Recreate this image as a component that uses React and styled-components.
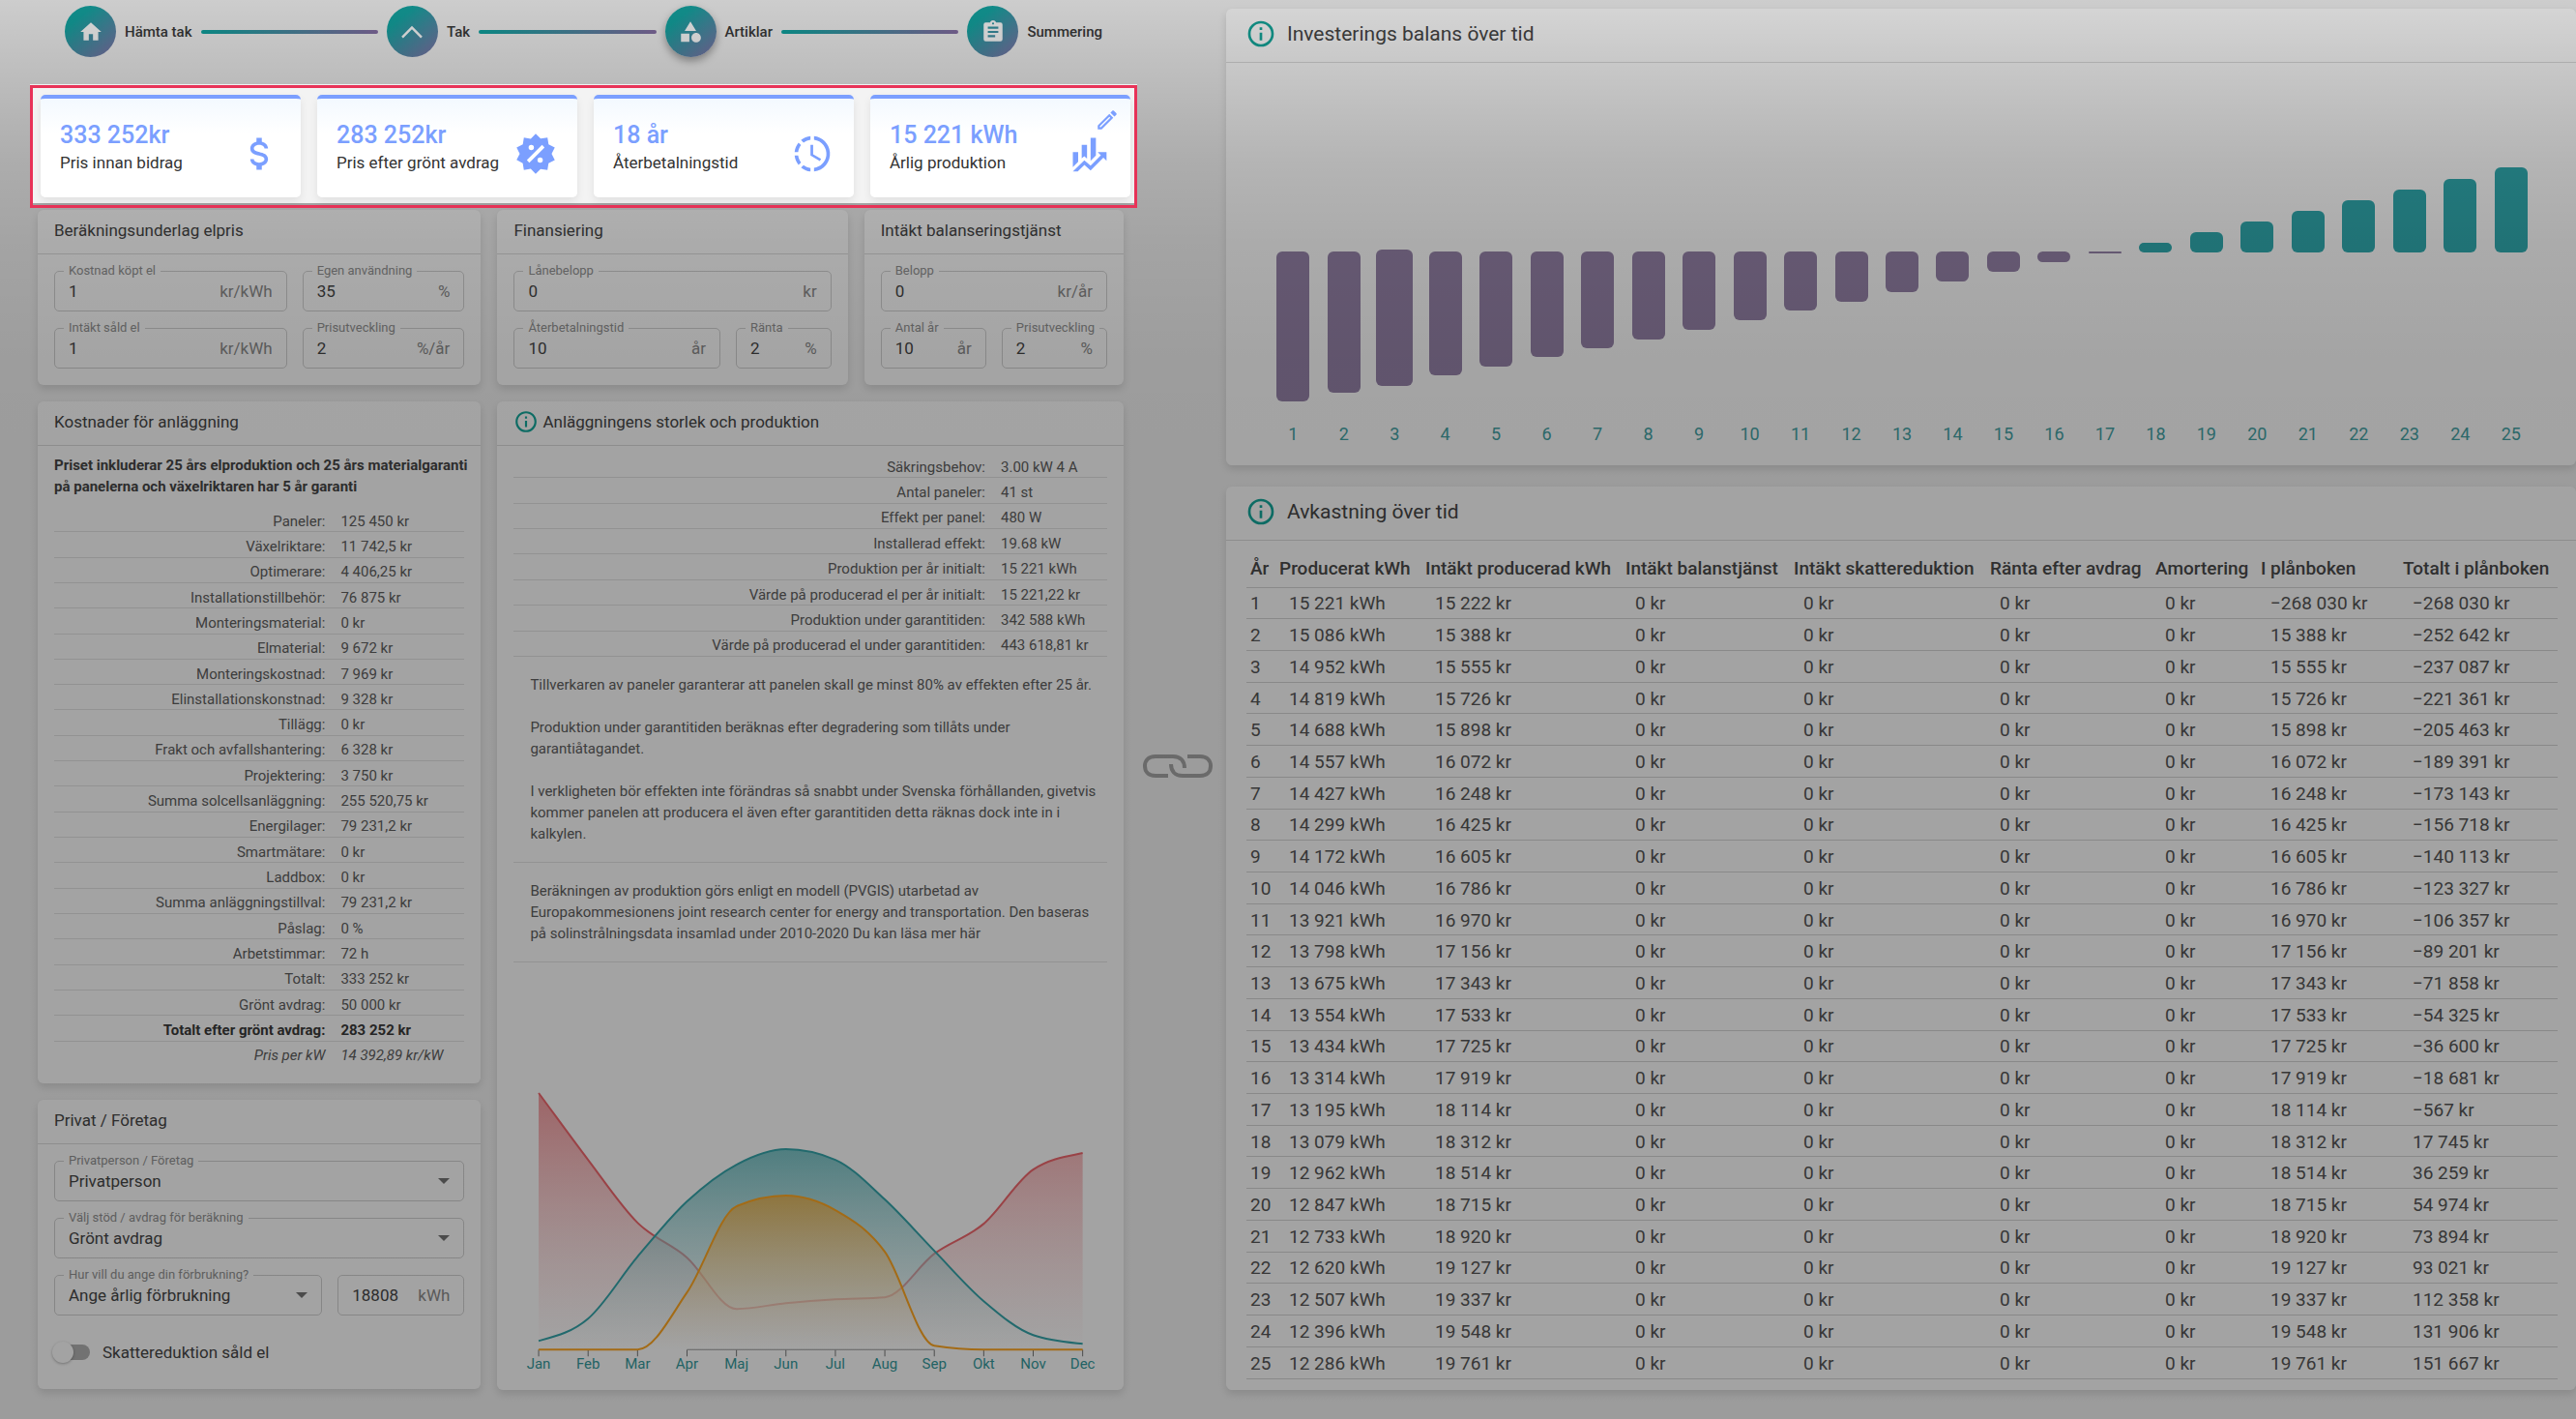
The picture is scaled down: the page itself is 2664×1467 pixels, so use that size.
import React from "react";
import styled, { createGlobalStyle } from "styled-components";

const GlobalStyle = createGlobalStyle`
  * {
    box-sizing: border-box;
  }

  body {
    margin: 0;
    background: #f4f4f4;
    color: #464646;
    font-family: Roboto, "Liberation Sans", sans-serif;
    font-size: 15px;
  }

  input, select, button {
    font: inherit;
    color: inherit;
  }
`;

const icons = {
  home: "M10,20V14H14V20H19V12H22L12,3L2,12H5V20H10Z",
  shape: "M11,13.5V21.5H3V13.5H11M12,2L17.5,11H6.5L12,2M17.5,13C20,13 22,15 22,17.5C22,20 20,22 17.5,22C15,22 13,20 13,17.5C13,15 15,13 17.5,13Z",
  roof: "M12,6.2L22,16.3L20.4,17.9L12,9.4L3.6,17.9L2,16.3Z",
  clipboard: "M17,9H7V7H17M17,13H7V11H17M14,17H7V15H14M12,3A1,1 0 0,1 13,4A1,1 0 0,1 12,5A1,1 0 0,1 11,4A1,1 0 0,1 12,3M19,3H14.82C14.4,1.84 13.3,1 12,1C10.7,1 9.6,1.84 9.18,3H5A2,2 0 0,0 3,5V19A2,2 0 0,0 5,21H19A2,2 0 0,0 21,19V5A2,2 0 0,0 19,3Z",
  dollar: "M7,15H9C9,16.08 10.37,17 12,17C13.63,17 15,16.08 15,15C15,13.9 13.96,13.5 11.76,12.97C9.64,12.44 7,11.78 7,9C7,7.21 8.47,5.69 10.5,5.18V3H13.5V5.18C15.53,5.69 17,7.21 17,9H15C15,7.92 13.63,7 12,7C10.37,7 9,7.92 9,9C9,10.1 10.04,10.5 12.24,11.03C14.36,11.56 17,12.22 17,15C17,16.79 15.53,18.31 13.5,18.82V21H10.5V18.82C8.47,18.31 7,16.79 7,15Z",
  sale: "M18.65,2.85L19.26,6.71L22.77,8.5L21,12L22.78,15.5L19.24,17.29L18.63,21.15L14.74,20.54L11.97,23.3L9.19,20.5L5.33,21.14L4.71,17.25L1.22,15.47L3,11.97L1.23,8.5L4.74,6.69L5.35,2.86L9.22,3.5L12,0.69L14.77,3.46L18.65,2.85M9.5,7A1.5,1.5 0 0,0 8,8.5A1.5,1.5 0 0,0 9.5,10A1.5,1.5 0 0,0 11,8.5A1.5,1.5 0 0,0 9.5,7M14.5,14A1.5,1.5 0 0,0 13,15.5A1.5,1.5 0 0,0 14.5,17A1.5,1.5 0 0,0 16,15.5A1.5,1.5 0 0,0 14.5,14M8.41,17L17,8.41L15.59,7L7,15.59L8.41,17Z",
  clock: "M13,2.03V4.05C17.39,4.59 20.5,8.58 19.96,12.97C19.5,16.61 16.64,19.5 13,19.93V21.93C18.5,21.38 22.5,16.5 21.95,11C21.5,6.25 17.73,2.5 13,2.03M11,2.06C9.05,2.25 7.19,3 5.67,4.26L7.1,5.74C8.22,4.84 9.57,4.26 11,4.06V2.06M4.26,5.67C3,7.19 2.25,9.04 2.05,11H4.05C4.24,9.58 4.8,8.23 5.69,7.1L4.26,5.67M2.06,13C2.26,14.96 3.03,16.81 4.27,18.33L5.69,16.9C4.81,15.77 4.24,14.42 4.06,13H2.06M7.1,18.37L5.67,19.74C7.18,21 9.04,21.79 11,22V20C9.58,19.82 8.23,19.25 7.1,18.37M12.5,7V12.25L17,14.92L16.25,16.15L11,13V7H12.5Z",
  finance: "M6,16.5L3,19.44V11H6M11,14.66L9.43,13.32L8,14.64V7H11M16,13L13,16V3H16M18.81,12.81L17,11H22V16L20.21,14.21L13,21.36L9.53,18.34L5.75,22H3L9.47,15.66L13,18.64",
  pencil: "M14.06,9L15,9.94L5.92,19H5V18.08L14.06,9M17.66,3C17.41,3 17.15,3.1 16.96,3.29L15.13,5.12L18.88,8.87L20.71,7.04C21.1,6.65 21.1,6 20.71,5.63L18.37,3.29C18.17,3.09 17.92,3 17.66,3M14.06,6.19L3,17.25V21H6.75L17.81,9.94L14.06,6.19Z",
  info: "M11,9H13V7H11M12,20C7.59,20 4,16.41 4,12C4,7.59 7.59,4 12,4C16.41,4 20,7.59 20,12C20,16.41 16.41,20 12,20M12,2A10,10 0 0,0 2,12A10,10 0 0,0 12,22A10,10 0 0,0 22,12A10,10 0 0,0 12,2M11,17H13V11H11V17Z",
};

const Icon = ({ name, size, ...props }) => (
  <svg width={size} height={size} viewBox="0 0 24 24" fill="currentColor" aria-hidden="true" {...props}>
    <path d={icons[name]} />
  </svg>
);

const Page = styled.div`
  position: relative;
  display: grid;
  grid-template-columns: minmax(0, 1123fr) 106px minmax(0, 1396fr);
  min-height: 100vh;
  padding: 0 0 31px 39px;
`;

// darkens everything except the highlighted tour target
const Shade = styled.div`
  position: absolute;
  inset: 0;
  z-index: 1;
  pointer-events: none;
  background: linear-gradient(
    rgba(0, 0, 0, 0.16) 0,
    rgba(0, 0, 0, 0.21) 60px,
    rgba(0, 0, 0, 0.255) 115px,
    rgba(0, 0, 0, 0.295) 170px,
    rgba(0, 0, 0, 0.33) 250px,
    rgba(0, 0, 0, 0.355) 370px,
    rgba(0, 0, 0, 0.362) 450px
  );
`;

const Calculator = styled.main`
  display: flex;
  flex-direction: column;
  padding-top: 6px;
`;

const Stepper = styled.nav`
  display: flex;
  align-items: center;
  gap: 9px;
  margin: 0 22px 0 28px;
`;

const Step = styled.a`
  display: flex;
  align-items: center;
  gap: 9px;
  color: #3a3a3a;
  font-size: 15px;
  font-weight: 500;
  text-decoration: none;
`;

const StepCircle = styled.span`
  display: flex;
  align-items: center;
  justify-content: center;
  width: 53px;
  height: 53px;
  border-radius: 50%;
  color: #fff;
  background: linear-gradient(140deg, #14a6a3 25%, #8573ab 100%);
  box-shadow: ${(props) => (props.$active ? "0 4px 8px rgba(0, 0, 0, 0.35)" : "none")};
`;

const StepLine = styled.span`
  flex: 1;
  height: 4px;
  border-radius: 2px;
  background: linear-gradient(90deg, #0ea5a0, #876fa5);
`;

const KpiRow = styled.section`
  position: relative;
  z-index: 2;
  display: grid;
  grid-template-columns: repeat(4, 1fr);
  gap: 17px;
  margin: 29px -14px 2px -8px;
  padding: 7px 4px 8px 8px;
  border: 3px solid #e83358;
  background: #f3f3f3;
  box-shadow: 0 -1px 0 #f0f0f0, inset 0 -2px 0 #a2a2a2;
`;

const KpiCard = styled.article`
  position: relative;
  display: flex;
  align-items: flex-end;
  justify-content: space-between;
  padding: 21px 21px 23px 20px;
  border-top: 4px solid #7b9fff;
  border-radius: 5px;
  color: #7b9fff;
  background: linear-gradient(#f3f9ff, #fff 35%);
  box-shadow: 0 4px 8px rgba(0, 0, 0, 0.08);
`;

const KpiValue = styled.div`
  font-size: 25px;
  font-weight: 500;
  line-height: 33px;
`;

const KpiLabel = styled.div`
  color: #333;
  font-size: 17px;
  line-height: 25px;
`;

const EditButton = styled.button`
  position: absolute;
  top: 9px;
  right: 11px;
  display: flex;
  padding: 0;
  border: 0;
  background: none;
`;

const SettingsRow = styled.div`
  display: grid;
  grid-template-columns: 458fr 362fr 268fr;
  gap: 17px;
  margin-bottom: 17px;
`;

const DetailsRow = styled.div`
  flex: 1;
  display: grid;
  grid-template-columns: minmax(0, 458fr) minmax(0, 647fr);
  gap: 17px;
`;

const Stack = styled.div`
  display: flex;
  flex-direction: column;
  gap: ${(props) => props.$gap}px;
`;

const Card = styled.section`
  display: flex;
  flex-direction: column;
  border-radius: 6px;
  background: #fff;
  box-shadow: 0 4px 8px rgba(0, 0, 0, 0.12);
`;

const ChartCard = styled(Card)`
  margin-top: 9px;
`;

const CardHeader = styled.header`
  display: flex;
  align-items: center;
  gap: ${(props) => (props.$large ? 11 : 4)}px;
  height: ${(props) => (props.$large ? 56 : 46)}px;
  padding: 0 ${(props) => (props.$large ? 20 : 17)}px 3px;
  border-bottom: 1px solid #dcdcdc;

  h2 {
    margin: 0;
    font-size: ${(props) => (props.$large ? 21 : 17)}px;
    font-weight: 400;
  }

  svg {
    color: #14a89c;
  }
`;

const FieldGrid = styled.div`
  display: grid;
  grid-template-columns: ${(props) => props.$columns};
  gap: 17px 16px;
  padding: 17px;
`;

const FieldBox = styled.div`
  position: relative;
  grid-column: ${(props) => (props.$wide ? "1 / -1" : "auto")};
  display: flex;
  align-items: center;
  height: 42px;
  padding: 0 14px;
  border: 1px solid #d2d2d2;
  border-radius: 5px;

  label {
    position: absolute;
    top: -8px;
    left: 9px;
    padding: 0 5px;
    background: #fff;
    color: #939393;
    font-size: 13px;
    line-height: 14px;
    white-space: nowrap;
  }

  input, select {
    flex: 1;
    min-width: 0;
    width: 0;
    height: 38px;
    padding: 0;
    border: 0;
    outline: 0;
    background: none;
    font-size: 17px;
    appearance: none;
  }

  span {
    color: #8c8c8c;
    font-size: 17px;
  }
`;

const SwitchRow = styled.div`
  grid-column: 1 / -1;
  display: flex;
  align-items: center;
  gap: 13px;
  height: 42px;
  font-size: 17px;
`;

const Switch = styled.input`
  position: relative;
  appearance: none;
  width: 37px;
  height: 16px;
  margin: 0;
  border-radius: 8px;
  background: #b2b2b2;

  &::before {
    content: "";
    position: absolute;
    top: -3px;
    left: -2px;
    width: 22px;
    height: 22px;
    border-radius: 50%;
    background: #fff;
    box-shadow: 0 1px 3px rgba(0, 0, 0, 0.3);
  }

  &:checked::before {
    left: 17px;
  }
`;

const CardBody = styled.div`
  padding: ${(props) => props.$padding};
`;

const Guarantee = styled.p`
  margin: 0 0 10px;
  font-size: 15px;
  font-weight: 700;
  line-height: 22px;
  white-space: nowrap;
`;

const SpecTable = styled.table`
  width: 100%;
  height: ${(props) => props.$height}px;
  border-collapse: collapse;
  color: #606060;
  line-height: 20px;

  tr + tr {
    border-top: 1px solid #e4e4e4;
  }

  th {
    padding: 4px 8px 0 0;
    font-weight: inherit;
    text-align: right;
  }

  td {
    width: ${(props) => props.$valueWidth}px;
    padding: 4px 0 0 8px;
    white-space: nowrap;
  }
`;

const SpecRow = styled.tr`
  color: ${(props) => (props.$kind === "total" ? "#3a3a3a" : "inherit")};
  font-weight: ${(props) => (props.$kind === "total" ? 700 : 400)};
  font-style: ${(props) => (props.$kind === "note" ? "italic" : "normal")};
`;

const Notes = styled.div`
  padding: 18px 0 18px 17px;
  border-top: 1px solid #e4e4e4;
  border-bottom: ${(props) => (props.$last ? "1px solid #e4e4e4" : "0")};
  color: #606060;
  line-height: 22px;

  p {
    margin: 0 0 22px;
  }

  p:last-child {
    margin: 0;
  }
`;

const AreaSvg = styled.svg`
  display: block;
  width: 100%;
  margin: auto 0 12px;
`;

const LinkColumn = styled.div`
  display: flex;
  align-items: center;
  justify-content: center;
  padding: 148px 0 0 6px;
`;

const BarPlot = styled.div`
  display: grid;
  grid-template-columns: repeat(25, 1fr);
  padding: 0 41px 13px 43px;
`;

const BarColumn = styled.div`
  display: flex;
  flex-direction: column;
  align-items: center;
  color: #45a3a5;
  font-size: 18px;
  line-height: 38px;
`;

const BarTrack = styled.div`
  height: 365px;
`;

const Bar = styled.div`
  width: ${(props) => (props.$hovered ? 38 : 34)}px;
  border-radius: 6px;
  background: ${(props) => (props.$negative ? "#9683a9" : "#30aaaf")};
`;

const ReturnTable = styled.table`
  width: 100%;
  table-layout: fixed;
  border-collapse: collapse;
  color: #565656;
  font-size: 19px;
  white-space: nowrap;

  th, td {
    padding: 1px 0 0 4px;
    border-bottom: 1px solid #d6d6d6;
    text-align: left;
  }

  th {
    height: 48px;
    padding-top: 9px;
    color: #4a4a4a;
    font-weight: 500;
  }

  tbody {
    height: 818px;
  }

  td + td {
    padding-left: 14px;
  }
`;

const steps = [
  { label: "Hämta tak", icon: "home" },
  { label: "Tak", icon: "roof" },
  { label: "Artiklar", icon: "shape", active: true },
  { label: "Summering", icon: "clipboard" },
];

const kpis = [
  { value: "333 252kr", label: "Pris innan bidrag", icon: "dollar" },
  { value: "283 252kr", label: "Pris efter grönt avdrag", icon: "sale" },
  { value: "18 år", label: "Återbetalningstid", icon: "clock" },
  { value: "15 221 kWh", label: "Årlig produktion", icon: "finance", editable: true },
];

const costs = [
  ["Paneler:", "125 450 kr"],
  ["Växelriktare:", "11 742,5 kr"],
  ["Optimerare:", "4 406,25 kr"],
  ["Installationstillbehör:", "76 875 kr"],
  ["Monteringsmaterial:", "0 kr"],
  ["Elmaterial:", "9 672 kr"],
  ["Monteringskostnad:", "7 969 kr"],
  ["Elinstallationskonstnad:", "9 328 kr"],
  ["Tillägg:", "0 kr"],
  ["Frakt och avfallshantering:", "6 328 kr"],
  ["Projektering:", "3 750 kr"],
  ["Summa solcellsanläggning:", "255 520,75 kr"],
  ["Energilager:", "79 231,2 kr"],
  ["Smartmätare:", "0 kr"],
  ["Laddbox:", "0 kr"],
  ["Summa anläggningstillval:", "79 231,2 kr"],
  ["Påslag:", "0 %"],
  ["Arbetstimmar:", "72 h"],
  ["Totalt:", "333 252 kr"],
  ["Grönt avdrag:", "50 000 kr"],
  ["Totalt efter grönt avdrag:", "283 252 kr", "total"],
  ["Pris per kW", "14 392,89 kr/kW", "note"],
];

const production = [
  ["Säkringsbehov:", "3.00 kW 4 A"],
  ["Antal paneler:", "41 st"],
  ["Effekt per panel:", "480 W"],
  ["Installerad effekt:", "19.68 kW"],
  ["Produktion per år initialt:", "15 221 kWh"],
  ["Värde på producerad el per år initialt:", "15 221,22 kr"],
  ["Produktion under garantitiden:", "342 588 kWh"],
  ["Värde på producerad el under garantitiden:", "443 618,81 kr"],
];

// [producerat kWh, intäkt kr, totalt i plånboken kr]
const years = [
  [15221, 15222, -268030],
  [15086, 15388, -252642],
  [14952, 15555, -237087],
  [14819, 15726, -221361],
  [14688, 15898, -205463],
  [14557, 16072, -189391],
  [14427, 16248, -173143],
  [14299, 16425, -156718],
  [14172, 16605, -140113],
  [14046, 16786, -123327],
  [13921, 16970, -106357],
  [13798, 17156, -89201],
  [13675, 17343, -71858],
  [13554, 17533, -54325],
  [13434, 17725, -36600],
  [13314, 17919, -18681],
  [13195, 18114, -567],
  [13079, 18312, 17745],
  [12962, 18514, 36259],
  [12847, 18715, 54974],
  [12733, 18920, 73894],
  [12620, 19127, 93021],
  [12507, 19337, 112358],
  [12396, 19548, 131906],
  [12286, 19761, 151667],
];

const columns = [
  ["År", 30],
  ["Producerat kWh", 151],
  ["Intäkt producerad kWh", 207],
  ["Intäkt balanstjänst", 174],
  ["Intäkt skattereduktion", 203],
  ["Ränta efter avdrag", 171],
  ["Amortering", 109],
  ["I plånboken", 147],
  ["Totalt i plånboken", 164],
];

const months = ["Jan", "Feb", "Mar", "Apr", "Maj", "Jun", "Jul", "Aug", "Sep", "Okt", "Nov", "Dec"];

const series = [
  { id: "use", color: "#f0686e", values: [265, 196, 131, 95, 42, 48, 52, 54, 99, 130, 186, 203] },
  { id: "sun", color: "#35a5aa", values: [9, 32, 96, 153, 191, 207, 196, 155, 102, 50, 15, 6] },
  { id: "own", color: "#ffa722", values: [0, 0, 0, 59, 148, 159, 144, 101, 4, 0, 0, 0] },
];

const format = (n) => String(n).replace("-", "−").replace(/(\d)(?=(\d{3})+$)/g, "$1 ");

const BASE = 275;
const LEFT = 43;
const STEP = 51.1;

// monotone cubic curve through the monthly values
const curve = (values) => {
  const slopes = values.slice(1).map((v, i) => v - values[i]);
  const tangents = values.map((_, i) => {
    if (i === 0 || i === values.length - 1) {
      return slopes[i === 0 ? 0 : i - 1] * 0.6;
    }
    const a = slopes[i - 1];
    const b = slopes[i];
    if (a * b <= 0) return 0;
    return Math.sign(a) * Math.min(Math.abs(a) * 2, Math.abs(b) * 2, Math.abs(a + b) / 2);
  });
  // the steep first drop of the consumption curve starts almost straight
  if (Math.abs(slopes[0]) > 50) tangents[0] = slopes[0];
  const x = (i) => LEFT + i * STEP;
  return values.slice(1).reduce((path, v, i) => {
    const c1 = BASE - values[i] - tangents[i] / 3;
    const c2 = BASE - v + tangents[i + 1] / 3;
    return `${path}C${x(i) + STEP / 3},${c1} ${x(i + 1) - STEP / 3},${c2} ${x(i + 1)},${BASE - v}`;
  }, `M${LEFT},${BASE - values[0]}`);
};

const AreaChart = () => (
  <AreaSvg viewBox="0 0 647 304" role="img" aria-label="Produktion per månad">
    <defs>
      {series.map(({ id, color }) => (
        <linearGradient key={id} id={id} x1="0" x2="0" y1="0" y2="1">
          <stop offset="0" stopColor={color} stopOpacity="0.65" />
          <stop offset="1" stopColor="#fff" stopOpacity="0.4" />
        </linearGradient>
      ))}
    </defs>
    {months.map((month, i) => (
      <g key={month}>
        <path d={`M${LEFT + i * STEP},${BASE}v7`} stroke="#777" />
        <text x={LEFT + i * STEP} y="295" textAnchor="middle" fontSize="15" fill="#359a9c">
          {month}
        </text>
      </g>
    ))}
    {series.map(({ id, color, values }) => (
      <g key={id}>
        <path d={`${curve(values)}V${BASE}H${LEFT}Z`} fill={`url(#${id})`} />
        <path d={curve(values)} fill="none" stroke={color} strokeWidth="2" />
      </g>
    ))}
    <path d={`M${LEFT + STEP * 3},${BASE}H${LEFT + STEP * 8}`} stroke="#999" />
  </AreaSvg>
);

const Field = ({ id, label, value, unit, wide, options }) => (
  <FieldBox $wide={wide}>
    {label && <label htmlFor={id}>{label}</label>}
    {options ? (
      <>
        <select id={id} defaultValue={value}>
          {options.map((option) => (
            <option key={option}>{option}</option>
          ))}
        </select>
        <svg width="12" height="6" viewBox="0 0 12 6" aria-hidden="true">
          <path d="M0,0H12L6,6Z" fill="#757575" />
        </svg>
      </>
    ) : (
      <>
        <input id={id} defaultValue={value} aria-label={label ? undefined : "Årlig förbrukning"} />
        <span>{unit}</span>
      </>
    )}
  </FieldBox>
);

const Specs = ({ rows, ...props }) => (
  <SpecTable {...props}>
    <tbody>
      {rows.map(([label, value, kind]) => (
        <SpecRow key={label} $kind={kind}>
          <th scope="row">{label}</th>
          <td>{value}</td>
        </SpecRow>
      ))}
    </tbody>
  </SpecTable>
);

const Header = ({ title, info, large }) => (
  <CardHeader $large={large}>
    {info && <Icon name="info" size={large ? 32 : 26} />}
    <h2>{title}</h2>
  </CardHeader>
);

const App = () => (
  <>
    <GlobalStyle />
    <Page>
      <Calculator>
        <Stepper aria-label="Steg">
          {steps.map(({ label, icon, active }, i) => (
            <React.Fragment key={label}>
              {i > 0 && <StepLine />}
              <Step href="#">
                <StepCircle $active={active}>
                  <Icon name={icon} size={26} />
                </StepCircle>
                {label}
              </Step>
            </React.Fragment>
          ))}
        </Stepper>

        <KpiRow>
          {kpis.map(({ value, label, icon, editable }) => (
            <KpiCard key={label}>
              <div>
                <KpiValue>{value}</KpiValue>
                <KpiLabel>{label}</KpiLabel>
              </div>
              <Icon name={icon} size={44} />
              {editable && (
                <EditButton type="button" aria-label="Redigera">
                  <Icon name="pencil" size={26} />
                </EditButton>
              )}
            </KpiCard>
          ))}
        </KpiRow>

        <SettingsRow>
          <Card>
            <Header title="Beräkningsunderlag elpris" />
            <FieldGrid $columns="241fr 168fr">
              <Field id="bought" label="Kostnad köpt el" value="1" unit="kr/kWh" />
              <Field id="own-use" label="Egen användning" value="35" unit="%" />
              <Field id="sold" label="Intäkt såld el" value="1" unit="kr/kWh" />
              <Field id="price-trend" label="Prisutveckling" value="2" unit="%/år" />
            </FieldGrid>
          </Card>
          <Card>
            <Header title="Finansiering" />
            <FieldGrid $columns="214fr 99fr">
              <Field id="loan" label="Lånebelopp" value="0" unit="kr" wide />
              <Field id="payback" label="Återbetalningstid" value="10" unit="år" />
              <Field id="interest" label="Ränta" value="2" unit="%" />
            </FieldGrid>
          </Card>
          <Card>
            <Header title="Intäkt balanseringstjänst" />
            <FieldGrid $columns="1fr 1fr">
              <Field id="amount" label="Belopp" value="0" unit="kr/år" wide />
              <Field id="year-count" label="Antal år" value="10" unit="år" />
              <Field id="service-trend" label="Prisutveckling" value="2" unit="%" />
            </FieldGrid>
          </Card>
        </SettingsRow>

        <DetailsRow>
          <Stack $gap={17}>
            <Card>
              <Header title="Kostnader för anläggning" />
              <CardBody $padding="9px 17px 18px">
                <Guarantee>
                  Priset inkluderar 25 års elproduktion och 25 års materialgaranti
                  <br />
                  på panelerna och växelriktaren har 5 år garanti
                </Guarantee>
                <Specs rows={costs} $height={578} $valueWidth={136} />
              </CardBody>
            </Card>
            <Card>
              <Header title="Privat / Företag" />
              <FieldGrid $columns="277fr 131fr">
                <Field id="customer" label="Privatperson / Företag" value="Privatperson" options={["Privatperson", "Företag"]} wide />
                <Field id="support" label="Välj stöd / avdrag för beräkning" value="Grönt avdrag" options={["Grönt avdrag", "Inget avdrag"]} wide />
                <Field id="usage-type" label="Hur vill du ange din förbrukning?" value="Ange årlig förbrukning" options={["Ange årlig förbrukning"]} />
                <Field id="usage" value="18808" unit="kWh" />
                <SwitchRow>
                  <Switch type="checkbox" id="tax" />
                  <label htmlFor="tax">Skattereduktion såld el</label>
                </SwitchRow>
              </FieldGrid>
            </Card>
          </Stack>

          <Card>
            <Header title="Anläggningens storlek och produktion" info />
            <CardBody $padding="7px 17px 0">
              <Specs rows={production} $height={210} $valueWidth={118} />
              <Notes>
                <p>Tillverkaren av paneler garanterar att panelen skall ge minst 80% av effekten efter 25 år.</p>
                <p>
                  Produktion under garantitiden beräknas efter degradering som tillåts under
                  <br />
                  garantiåtagandet.
                </p>
                <p>
                  I verkligheten bör effekten inte förändras så snabbt under Svenska förhållanden, givetvis
                  <br />
                  kommer panelen att producera el även efter garantitiden detta räknas dock inte in i
                  <br />
                  kalkylen.
                </p>
              </Notes>
              <Notes $last>
                <p>
                  Beräkningen av produktion görs enligt en modell (PVGIS) utarbetad av
                  <br />
                  Europakommesionens joint research center for energy and transportation. Den baseras
                  <br />
                  på solinstrålningsdata insamlad under 2010-2020 Du kan läsa mer här
                </p>
              </Notes>
            </CardBody>
            <AreaChart />
          </Card>
        </DetailsRow>
      </Calculator>

      <LinkColumn>
        <svg width="74" height="26" viewBox="0 0 74 26" fill="none" stroke="#a6a6a6" strokeWidth="4" aria-hidden="true">
          <path d="M27,23H14C6,23 3,18 3,13C3,8 6,3 14,3H32C40,3 44,8 44,15" />
          <path d="M47,3H60C68,3 71,8 71,13C71,18 68,23 60,23H42C34,23 30,18 30,11" />
        </svg>
      </LinkColumn>

      <Stack as="aside" $gap={22}>
        <ChartCard>
          <Header title="Investerings balans över tid" info large />
          <BarPlot>
            {years.map(([, , total], i) => {
              const hovered = i === 2;
              const height = Math.max(2, Math.round(Math.abs(total) * 0.000578)) + (hovered ? 4 : 0);
              const top = total < 0 ? 195 - (hovered ? 2 : 0) : 196 - height;
              return (
                <BarColumn key={i}>
                  <BarTrack>
                    <Bar $negative={total < 0} $hovered={hovered} style={{ height, marginTop: top }} />
                  </BarTrack>
                  {i + 1}
                </BarColumn>
              );
            })}
          </BarPlot>
        </ChartCard>

        <Card>
          <Header title="Avkastning över tid" info large />
          <CardBody $padding="0 19px 11px 21px">
            <ReturnTable>
              <colgroup>
                {columns.map(([title, width]) => (
                  <col key={title} style={{ width }} />
                ))}
              </colgroup>
              <thead>
                <tr>
                  {columns.map(([title]) => (
                    <th key={title} scope="col">{title}</th>
                  ))}
                </tr>
              </thead>
              <tbody>
                {years.map(([kwh, income, total], i) => (
                  <tr key={kwh}>
                    <td>{i + 1}</td>
                    <td>{format(kwh)} kWh</td>
                    <td>{format(income)} kr</td>
                    <td>0 kr</td>
                    <td>0 kr</td>
                    <td>0 kr</td>
                    <td>0 kr</td>
                    <td>{format(i === 0 ? total : income)} kr</td>
                    <td>{format(total)} kr</td>
                  </tr>
                ))}
              </tbody>
            </ReturnTable>
          </CardBody>
        </Card>
      </Stack>
      <Shade />
    </Page>
  </>
);

export default App;
